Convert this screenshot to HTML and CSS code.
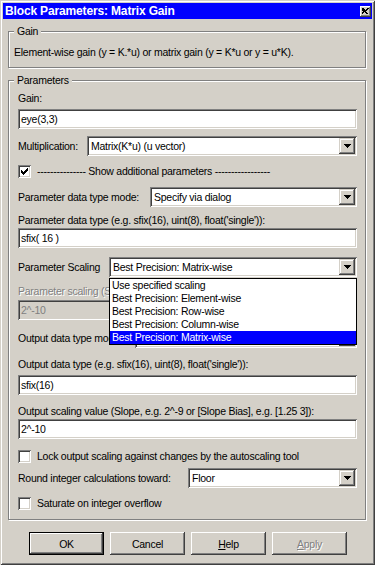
FILE: index.html
```html
<!DOCTYPE html>
<html>
<head>
    <title>Block Parameters: Matrix Gain</title>
    <meta name="viewport" content="width=device-width, initial-scale=1.0">
    <link rel="stylesheet" href="styles.css">
</head>
<body>
    <div class="window">
        <div class="titlebar">
            <span class="title">Block Parameters: Matrix Gain</span>
            <span class="close-btn">
                <svg width="7" height="6" viewBox="0 0 7 6"><path d="M0 0h2v1h1v1h1v-1h1v-1h2v1h-1v1h-1v1h-1v1h1v1h1v1h-2v-1h-1v-1h-1v1h-1v1h-2v-1h1v-1h1v-1h-1v-1h-1z" fill="#000"/></svg>
            </span>
        </div>

        <fieldset class="group group-gain">
            <legend>Gain</legend>
            <p class="desc">Element-wise gain (y = K.*u) or matrix gain (y = K*u or y = u*K).</p>
        </fieldset>

        <fieldset class="group group-params">
            <legend>Parameters</legend>

            <div class="lbl mt5">Gain:</div>
            <div class="edit mt4">eye(3,3)</div>

            <div class="row mt7">
                <span class="lbl w-mult">Multiplication:</span>
                <div class="combo"><span class="combo-text">Matrix(K*u) (u vector)</span><span class="combo-btn"><svg width="7" height="4" viewBox="0 0 7 4"><path d="M0 0h7v1h-1v1h-1v1h-1v1h-1v-1h-1v-1h-1v-1h-1z"/></svg></span></div>
            </div>

            <div class="check-row mt9">
                <span class="checkbox"><svg width="7" height="7" viewBox="0 0 7 7"><path d="M6 0h1v3h-1v1h-1v1h-1v1h-1v1h-1v-1h-1v-1h-1v-3h1v1h1v1h1v-1h1v-1h1v-1h1z"/></svg></span>
                <span class="check-label">--------------- Show additional parameters -----------------</span>
            </div>

            <div class="row mt9">
                <span class="lbl w-mode">Parameter data type mode:</span>
                <div class="combo"><span class="combo-text">Specify via dialog</span><span class="combo-btn"><svg width="7" height="4" viewBox="0 0 7 4"><path d="M0 0h7v1h-1v1h-1v1h-1v1h-1v-1h-1v-1h-1v-1h-1z"/></svg></span></div>
            </div>

            <div class="lbl mt7">Parameter data type (e.g. sfix(16), uint(8), float('single')):</div>
            <div class="edit mt1">sfix( 16 )</div>

            <div class="row mt9">
                <span class="lbl w-scaling">Parameter Scaling</span>
                <div class="combo combo-open"><span class="combo-text">Best Precision: Matrix-wise</span><span class="combo-btn"><svg width="7" height="4" viewBox="0 0 7 4"><path d="M0 0h7v1h-1v1h-1v1h-1v1h-1v-1h-1v-1h-1v-1h-1z"/></svg></span>
                    <ul class="droplist">
                        <li>Use specified scaling</li>
                        <li>Best Precision: Element-wise</li>
                        <li>Best Precision: Row-wise</li>
                        <li>Best Precision: Column-wise</li>
                        <li class="selected">Best Precision: Matrix-wise</li>
                    </ul>
                </div>
            </div>

            <div class="lbl lbl-clip disabled mt8">Parameter scaling (Slope, e.g. 2^-9):</div>
            <div class="edit edit-disabled mt2">2^-10</div>

            <div class="row mt8">
                <span class="lbl w-outmode">Output data type mode:</span>
                <div class="combo"><span class="combo-text"></span><span class="combo-btn"><svg width="7" height="4" viewBox="0 0 7 4"><path d="M0 0h7v1h-1v1h-1v1h-1v1h-1v-1h-1v-1h-1v-1h-1z"/></svg></span></div>
            </div>

            <div class="lbl mt10">Output data type (e.g. sfix(16), uint(8), float('single')):</div>
            <div class="edit mt4">sfix(16)</div>

            <div class="lbl mt10">Output scaling value (Slope, e.g. 2^-9 or [Slope Bias], e.g. [1.25 3]):</div>
            <div class="edit mt1">2^-10</div>

            <div class="check-row mt11">
                <span class="checkbox"></span>
                <span class="check-label">Lock output scaling against changes by the autoscaling tool</span>
            </div>

            <div class="row mt5">
                <span class="lbl w-round">Round integer calculations toward:</span>
                <div class="combo"><span class="combo-text">Floor</span><span class="combo-btn"><svg width="7" height="4" viewBox="0 0 7 4"><path d="M0 0h7v1h-1v1h-1v1h-1v1h-1v-1h-1v-1h-1v-1h-1z"/></svg></span></div>
            </div>

            <div class="check-row mt9">
                <span class="checkbox"></span>
                <span class="check-label">Saturate on integer overflow</span>
            </div>
        </fieldset>

        <div class="buttons">
            <div class="btn btn-default">OK</div>
            <div class="btn">Cancel</div>
            <div class="btn"><u>H</u>elp</div>
            <div class="btn btn-disabled"><u>A</u>pply</div>
        </div>
    </div>
</body>
</html>
```

FILE: styles.css
```css
* {
    box-sizing: border-box;
}

body {
    margin: 0;
    font-family: "Liberation Sans", Arial, sans-serif;
    font-size: 10.5px;
    letter-spacing: -0.25px;
    color: #000;
}

.window {
    width: 375px;
    height: 565px;
    padding: 3px;
    background-color: #d4d0c8;
    box-shadow: inset 1px 1px #d4d0c8, inset -1px -1px #404040, inset 2px 2px #fff, inset -2px -2px #808080;
    display: flex;
    flex-direction: column;
}

.titlebar {
    height: 16px;
    flex-shrink: 0;
    background-color: #0000ff;
    color: #fff;
    display: flex;
    align-items: center;
    justify-content: space-between;
    padding: 0 1px 0 2px;
}

.title {
    font-weight: bold;
    font-size: 12px;
    line-height: 14px;
    letter-spacing: -0.15px;
    white-space: nowrap;
}

.close-btn {
    width: 11px;
    height: 11px;
    background-color: #d4d0c8;
    box-shadow: inset -1px -1px #404040, inset 1px 1px #fff, inset -2px -2px #808080;
    display: flex;
    align-items: center;
    justify-content: center;
    padding-bottom: 1px;
}

/* group boxes */
.group {
    width: 358px;
    margin: 6px 0 0 5px;
    padding: 8px 8px 8px 9px;
    border: 1px solid #808080;
    box-shadow: inset 1px 1px #fff, 1px 1px #fff;
    min-width: 0;
    flex-shrink: 0;
}

.group legend {
    margin-left: -4px;
    padding: 0 3px;
    line-height: 13px;
    background-color: #d4d0c8;
}

.group-params {
    padding-top: 0;
    padding-bottom: 9px;
}

.desc {
    margin: 0 0 0 -4px;
    line-height: 13px;
    white-space: nowrap;
}

.lbl {
    display: block;
    height: 13px;
    line-height: 13px;
    white-space: nowrap;
    overflow: hidden;
}

.lbl-clip {
    width: 91px;
}

.disabled {
    color: #808080;
    text-shadow: 1px 1px 0 #fff;
}

.edit {
    height: 20px;
    line-height: 20px;
    padding-left: 3px;
    background-color: #fff;
    box-shadow: inset 1px 1px #808080, inset -1px -1px #fff, inset 2px 2px #404040, inset -2px -2px #d4d0c8;
    white-space: nowrap;
}

.edit-disabled {
    background-color: #d4d0c8;
    color: #808080;
}

.row {
    display: flex;
    align-items: center;
    height: 20px;
}

.row .lbl {
    flex-shrink: 0;
}

.w-mult { width: 69px; }
.w-mode { width: 132px; }
.w-scaling { width: 91px; }
.w-outmode { width: 91px; margin-right: 26px; }
.w-round { width: 170px; }

.combo {
    flex: 1;
    height: 20px;
    display: flex;
    align-items: center;
    justify-content: space-between;
    padding: 2px;
    background-color: #fff;
    box-shadow: inset 1px 1px #808080, inset -1px -1px #fff, inset 2px 2px #404040, inset -2px -2px #d4d0c8;
}

.combo-open {
    position: relative;
    z-index: 2;
}

.combo-text {
    padding-left: 2px;
    line-height: 16px;
    white-space: nowrap;
}

.combo-btn {
    width: 16px;
    height: 16px;
    flex-shrink: 0;
    background-color: #d4d0c8;
    box-shadow: inset -1px -1px #404040, inset 1px 1px #d4d0c8, inset -2px -2px #808080, inset 2px 2px #fff;
    display: flex;
    align-items: center;
    justify-content: center;
}

.combo-btn svg {
    display: block;
    fill: #000;
}

.droplist {
    position: absolute;
    top: 21px;
    left: 0;
    right: 0;
    margin: 0;
    padding: 0;
    list-style: none;
    background-color: #fff;
    border: 1px solid #000;
}

.droplist li {
    height: 13px;
    line-height: 13px;
    padding-left: 2px;
    white-space: nowrap;
}

.droplist .selected {
    background-color: #0000ff;
    color: #fff;
}

.check-row {
    display: flex;
    align-items: center;
    height: 13px;
}

.checkbox {
    width: 13px;
    height: 13px;
    flex-shrink: 0;
    padding: 3px;
    background-color: #fff;
    box-shadow: inset 1px 1px #808080, inset -1px -1px #fff, inset 2px 2px #404040, inset -2px -2px #d4d0c8;
}

.checkbox svg {
    display: block;
    fill: #000;
}

.check-label {
    margin-left: 6px;
    line-height: 13px;
    white-space: nowrap;
}

.mt1 { margin-top: 1px; }
.mt2 { margin-top: 2px; }
.mt4 { margin-top: 4px; }
.mt5 { margin-top: 5px; }
.mt7 { margin-top: 7px; }
.mt8 { margin-top: 8px; }
.mt9 { margin-top: 9px; }
.mt10 { margin-top: 10px; }
.mt11 { margin-top: 11px; }

/* dialog buttons */
.buttons {
    display: flex;
    justify-content: center;
    gap: 6px;
    margin-top: 12px;
    padding-left: 1px;
}

.btn {
    width: 75px;
    height: 23px;
    display: flex;
    align-items: center;
    justify-content: center;
    background-color: #d4d0c8;
    box-shadow: inset -1px -1px #404040, inset 1px 1px #fff, inset -2px -2px #808080;
}

.btn u {
    text-decoration-thickness: 1px;
}

.btn-default {
    border: 1px solid #000;
}

.btn-disabled {
    color: #808080;
    text-shadow: 1px 1px 0 #fff;
}
```
